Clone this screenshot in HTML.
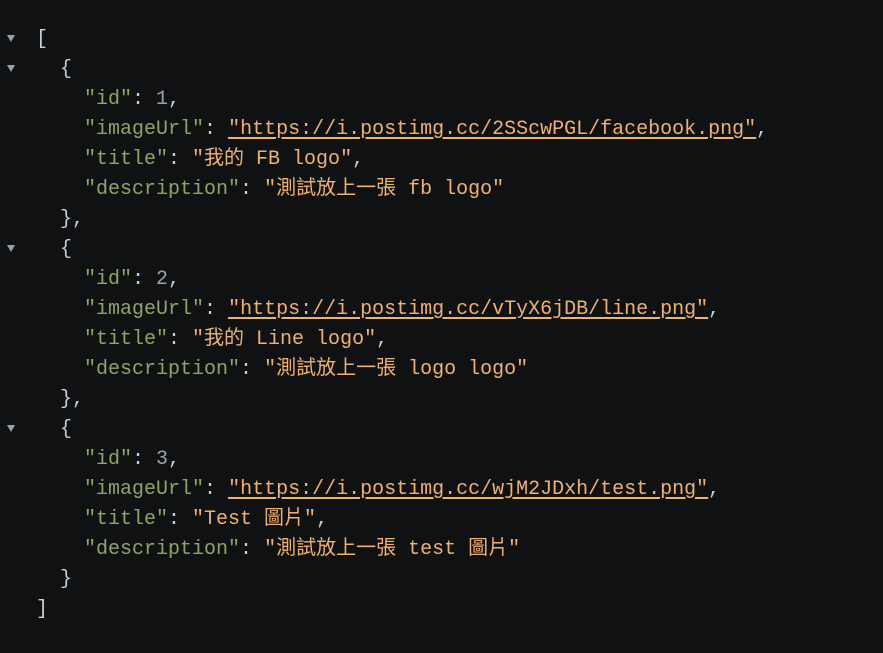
<!DOCTYPE html>
<html><head><meta charset="utf-8"><style>
html,body{margin:0;padding:0;background:#0f1113;width:883px;height:653px;overflow:hidden}
pre{margin:0;position:absolute;left:36px;top:25px;font-family:"Liberation Mono","Noto Sans CJK TC",monospace;font-size:20px;line-height:30px;color:#c9cdd1}
.k{color:#8fa563}.s{color:#f0b26c}.n{color:#9ea3a8}.u{color:#f0b26c;text-decoration:underline;text-underline-offset:3px}
.t{position:absolute;left:7px;width:0;height:0;border-left:4px solid transparent;border-right:4px solid transparent;border-top:7px solid #9aa0a6}
</style></head><body>
<div class="t" style="top:35px"></div>
<div class="t" style="top:65px"></div>
<div class="t" style="top:245px"></div>
<div class="t" style="top:425px"></div>
<pre>[
  {
    <span class="k">"id"</span>: <span class="n">1</span>,
    <span class="k">"imageUrl"</span>: <span class="u">"https://i.postimg.cc/2SScwPGL/facebook.png"</span>,
    <span class="k">"title"</span>: <span class="s">"我的 FB logo"</span>,
    <span class="k">"description"</span>: <span class="s">"測試放上一張 fb logo"</span>
  },
  {
    <span class="k">"id"</span>: <span class="n">2</span>,
    <span class="k">"imageUrl"</span>: <span class="u">"https://i.postimg.cc/vTyX6jDB/line.png"</span>,
    <span class="k">"title"</span>: <span class="s">"我的 Line logo"</span>,
    <span class="k">"description"</span>: <span class="s">"測試放上一張 logo logo"</span>
  },
  {
    <span class="k">"id"</span>: <span class="n">3</span>,
    <span class="k">"imageUrl"</span>: <span class="u">"https://i.postimg.cc/wjM2JDxh/test.png"</span>,
    <span class="k">"title"</span>: <span class="s">"Test 圖片"</span>,
    <span class="k">"description"</span>: <span class="s">"測試放上一張 test 圖片"</span>
  }
]</pre>
</body></html>
